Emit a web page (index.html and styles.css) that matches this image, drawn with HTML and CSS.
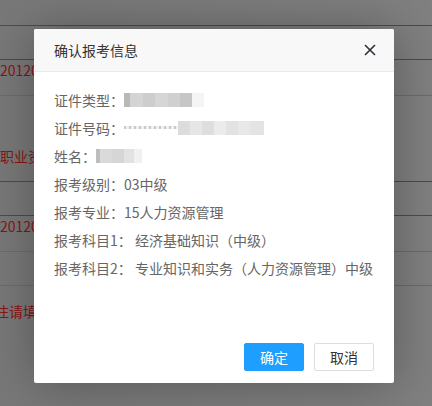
FILE: index.html
```html
<!DOCTYPE html>
<html lang="zh-CN">
<head>
<meta charset="utf-8">
<title>确认报考信息</title>
<link rel="stylesheet" href="styles.css">
</head>
<body>
<div class="page">
  <div class="row r0"></div>
  <div class="row r1 teal"></div>
  <div class="row r2 teal"><span class="red">2012010001</span></div>
  <div class="row r3 gray"><span class="red">职业资格</span></div>
  <div class="row r4 teal"></div>
  <div class="row r5 teal"><span class="red">2012010002</span></div>
  <div class="row r6 gray"></div>
  <div class="row r7 gray"><span class="red shift">注请填写</span></div>
</div>

<div class="dialog">
  <div class="dlg-head">
    <span class="dlg-title">确认报考信息</span>
    <svg class="close" width="12" height="12" viewBox="0 0 12 12"><path d="M1 1L11 11M11 1L1 11" stroke="#2f2f3a" stroke-width="1.6" fill="none"/></svg>
  </div>
  <div class="dlg-body">
    <div class="line">证件类型：<span class="blur b1"><i class="c1"></i><i class="c2"></i><i class="c3"></i><i class="c4"></i><i class="c5"></i><i class="c6"></i><i class="c7"></i></span></div>
    <div class="line">证件号码：<span class="blur b2"><i class="d0"></i><i class="d1"></i><i class="d2"></i><i class="d3"></i><i class="d4"></i><i class="d5"></i><i class="d6"></i><i class="d7"></i></span></div>
    <div class="line">姓名：<span class="blur b3"><i class="e1"></i><i class="e2"></i><i class="e3"></i><i class="e4"></i><i class="e5"></i></span></div>
    <div class="line">报考级别：03中级</div>
    <div class="line">报考专业：15人力资源管理</div>
    <div class="line">报考科目1： 经济基础知识（中级）</div>
    <div class="line">报考科目2： 专业知识和实务（人力资源管理）中级</div>
  </div>
  <div class="dlg-foot">
    <button class="btn primary">确定</button>
    <button class="btn">取消</button>
  </div>
</div>
</body>
</html>
```
FILE: styles.css
```css
html, body {
  margin: 0;
  padding: 0;
}
body {
  width: 432px;
  height: 406px;
  overflow: hidden;
  background: #7b7b7b;
  font-family: "Noto Sans CJK SC", "Noto Sans", sans-serif;
  position: relative;
}
.page {
  display: flex;
  flex-direction: column;
  width: 432px;
  height: 406px;
  background: linear-gradient(90deg, #787878 0%, #7c7c7c 50%, #808080 100%);
}
.row {
  box-sizing: border-box;
  flex: none;
  overflow: hidden;
  white-space: nowrap;
}
.teal { border-top: 1px solid #2c5a52; }
.gray { border-top: 1px solid #6b6b6b; }
.r0 { height: 25px; }
.r1 { height: 34px; }
.r2 { height: 36px; }
.r3 { height: 86px; padding-top: 50px; }
.r4 { height: 34px; }
.r5 { height: 36px; }
.r6 { height: 34px; }
.r7 { flex: 1; padding-top: 15px; }
.red {
  display: block;
  color: #8a1414;
  font-size: 14px;
  line-height: 20px;
}
.shift { margin-left: -5px; }

.dialog {
  position: absolute;
  left: 34px;
  top: 29px;
  width: 360px;
  height: 354px;
  background: #fff;
  border-radius: 2px;
  box-shadow: 1px 1px 50px rgba(0, 0, 0, 0.3);
  display: flex;
  flex-direction: column;
  overflow: hidden;
}
.dlg-head {
  height: 42px;
  background: #f8f8f8;
  border-bottom: 1px solid #eaeaea;
  display: flex;
  align-items: center;
  justify-content: space-between;
  padding: 0 18px 0 20px;
  flex: none;
}
.dlg-title {
  font-size: 14px;
  color: #333;
}
.close { display: block; }
.dlg-body {
  padding: 14px 20px 0;
  font-size: 14px;
  color: #666;
}
.line {
  line-height: 28px;
  height: 28px;
  white-space: nowrap;
  display: flex;
  align-items: center;
}
.blur {
  display: inline-flex;
  height: 14px;
}
.blur i { display: block; height: 14px; }
.c1 { width: 6px; background: #b9b9b9; }
.c2 { width: 13px; background: #d4d4d4; }
.c3 { width: 12px; background: #cdcdcd; }
.c4 { width: 13px; background: #d6d6d6; }
.c5 { width: 12px; background: #d0d0d0; }
.c6 { width: 12px; background: #c6c6c6; }
.c7 { width: 12px; background: #f4f5f4; }
.d0 { width: 54px; background: repeating-linear-gradient(90deg, #c9c9c9 0 2px, #f0f0f0 2px 5px); height: 3px !important; margin-top: 5px; }
.d1 { width: 12px; background: #dcdcdc; }
.d2 { width: 12px; background: #e6e6e6; }
.d3 { width: 12px; background: #dedede; }
.d4 { width: 12px; background: #ebebeb; }
.d5 { width: 12px; background: #e2e2e2; }
.d6 { width: 12px; background: #e8e8e8; }
.d7 { width: 14px; background: #e4e4e4; }
.b2 { align-items: flex-start; }
.e1 { width: 4px; background: #bdbdbd; }
.e2 { width: 12px; background: #dadada; }
.e3 { width: 12px; background: #d6d6d6; }
.e4 { width: 10px; background: #e2e2e2; }
.e5 { width: 8px; background: #f0f0f0; }

.dlg-foot {
  margin-top: auto;
  display: flex;
  justify-content: flex-end;
  gap: 10px;
  padding: 0 20px 12px;
}
.btn {
  box-sizing: border-box;
  width: 60px;
  height: 28px;
  border: 1px solid #dedede;
  border-radius: 2px;
  background: #fff;
  color: #333;
  font-family: "Noto Sans CJK SC", sans-serif;
  font-size: 14px;
  line-height: 26px;
  padding: 0;
  margin: 0;
}
.btn.primary {
  background: #1e9fff;
  border-color: #1e9fff;
  color: #fff;
}
```
